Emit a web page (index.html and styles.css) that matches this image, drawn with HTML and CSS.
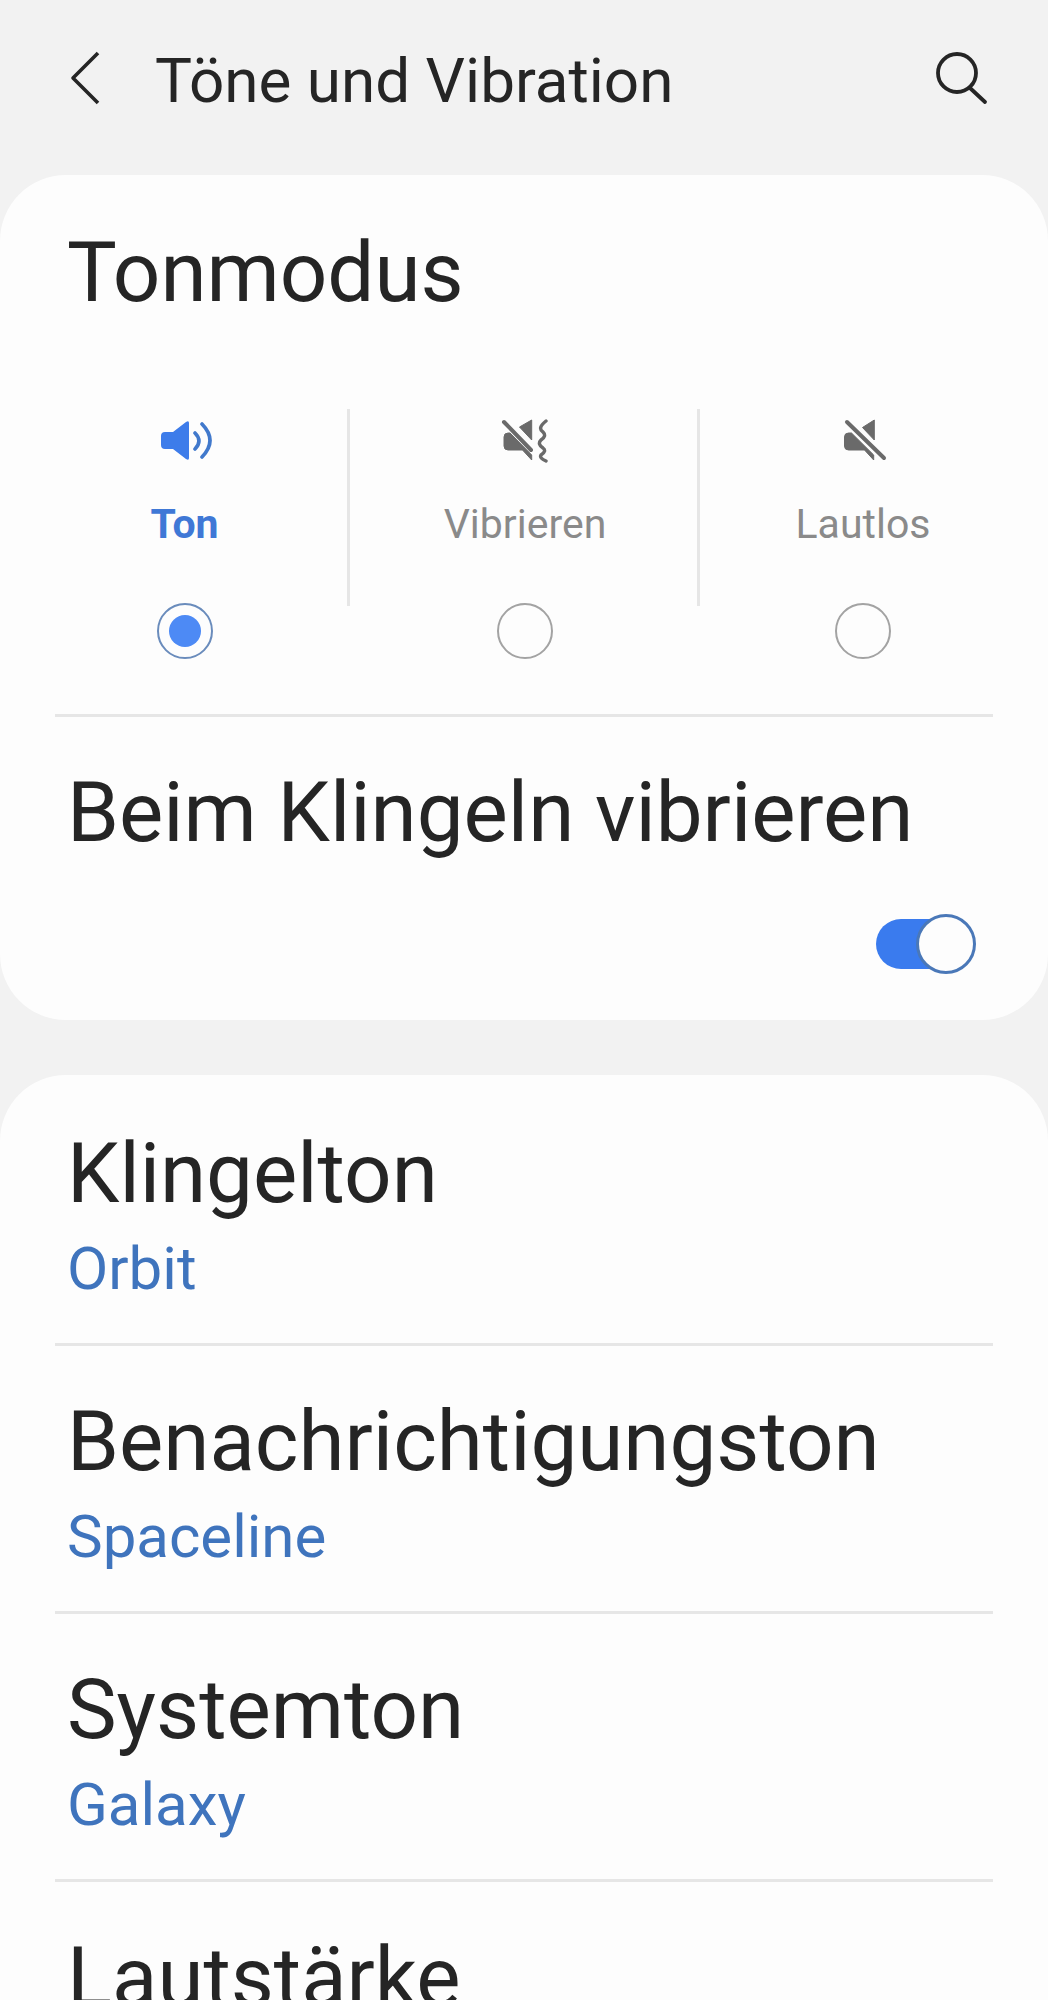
FILE: index.html
```html
<!DOCTYPE html>
<html lang="de">
<head>
  <meta charset="UTF-8" />
  <title>Töne und Vibration</title>
  <link rel="stylesheet" href="styles.css">
</head>
<body>

  <header class="topbar">
    <svg class="back-icon" width="30" height="54" viewBox="0 0 30 54">
      <path d="M28 2 L3 27 L28 52" fill="none" stroke="#252525" stroke-width="3.6" stroke-linejoin="round" />
    </svg>
    <h1 class="page-title">Töne und Vibration</h1>
    <svg class="search-icon" width="54" height="54" viewBox="0 0 54 54">
      <circle cx="22" cy="22" r="19" fill="none" stroke="#252525" stroke-width="3.8" />
      <path d="M35 37 L50 51" fill="none" stroke="#252525" stroke-width="3.8" stroke-linecap="round" />
    </svg>
  </header>

  <section class="card">
    <h2 class="card-title">Tonmodus</h2>

    <div class="modes">
      <div class="mode active">
        <div class="mode-top">
          <svg class="mode-icon" width="56" height="44" viewBox="0 0 56 44">
            <path d="M4 17 q0-4 4-4 h8 L29 3 q3-2 3 1 V39 q0 3-3 1 L16 30 H8 q-4 0-4-4 Z" fill="#3d7cea" />
            <path d="M38 14 Q46 22 38 30 M45 5 Q61 21.5 45 38" fill="none" stroke="#4179cc" stroke-width="3.6" stroke-linecap="round" />
          </svg>
          <span class="mode-label">Ton</span>
        </div>
        <span class="radio checked"></span>
      </div>

      <div class="mode">
        <div class="mode-top">
          <svg class="mode-icon" width="56" height="44" viewBox="0 0 56 44">
            <path d="M7 3 L34 31" fill="none" stroke="#6a6a6a" stroke-width="4" stroke-linecap="round" />
            <path d="M34.7 1 V21 L22.5 8 Z M7 18 q0-4 4-4 h2 L34.7 36 V41 L25.5 31 H11 q-4 0-4-4 Z" fill="#6a6a6a" stroke="#6a6a6a" stroke-width="1" stroke-linejoin="round" />
            <path d="M49 2 Q40 9 46 13 Q50 17 44 21 Q40 25 46 29 Q50 32 44 36 Q42 39 49 42" fill="none" stroke="#6a6a6a" stroke-width="3.4" stroke-linecap="round" />
          </svg>
          <span class="mode-label">Vibrieren</span>
        </div>
        <span class="radio"></span>
      </div>

      <div class="mode">
        <div class="mode-top no-line">
          <svg class="mode-icon" width="56" height="44" viewBox="0 0 56 44">
            <path d="M12 3 L49 39" fill="none" stroke="#6a6a6a" stroke-width="4" stroke-linecap="round" />
            <path d="M39.3 1 V21 L27.5 8.5 Z M9.5 18 q0-4 4-4 h3 L38.7 36 V41 L29.5 31 H13.5 q-4 0-4-4 Z" fill="#6a6a6a" stroke="#6a6a6a" stroke-width="1" stroke-linejoin="round" />
          </svg>
          <span class="mode-label">Lautlos</span>
        </div>
        <span class="radio"></span>
      </div>
    </div>

    <div class="ring-row">
      <h2 class="card-title">Beim Klingeln vibrieren</h2>
      <div class="toggle"><span class="toggle-knob"></span></div>
    </div>
  </section>

  <section class="card list-card">
    <div class="list-row">
      <div class="row-title">Klingelton</div>
      <div class="row-value">Orbit</div>
    </div>
    <div class="list-row">
      <div class="row-title">Benachrichtigungston</div>
      <div class="row-value">Spaceline</div>
    </div>
    <div class="list-row">
      <div class="row-title">Systemton</div>
      <div class="row-value">Galaxy</div>
    </div>
    <div class="list-row">
      <div class="row-title">Lautstärke</div>
    </div>
  </section>

</body>
</html>
```

FILE: styles.css
```css
html, body {
  margin: 0;
  padding: 0;
}

body {
  font-family: Roboto, "Liberation Sans", sans-serif;
  background: #f2f2f2;
  color: #252525;
  height: 2000px;
  overflow: hidden;
}

.topbar {
  height: 175px;
  display: flex;
  align-items: center;
  padding: 0 59px 0 70px;
  box-sizing: border-box;
}

.back-icon {
  margin-top: -20px;
}

.page-title {
  flex: 1;
  margin: -14px 0 0 55px;
  font-size: 62px;
  font-weight: 400;
  line-height: 70px;
}

.search-icon {
  margin-top: -20px;
}

.card {
  background: #fdfdfd;
  border-radius: 66px;
}

.card-title {
  margin: 0;
  padding-left: 67px;
  font-size: 83.5px;
  font-weight: 400;
  line-height: 96px;
}

.card > .card-title {
  padding-top: 50px;
}

.modes {
  display: grid;
  grid-template-columns: 331px 350px 326px;
  margin: 88px 0 0 19px;
}

.mode {
  display: flex;
  flex-direction: column;
  align-items: center;
}

.mode-top {
  width: 100%;
  height: 197px;
  box-sizing: border-box;
  border-right: 3px solid #e6e6e6;
  display: flex;
  flex-direction: column;
  align-items: center;
  padding: 10px 0 0 3px;
}

.mode-top.no-line {
  border-right: none;
  padding-left: 0;
}

.mode-icon {
  display: block;
}

.mode-label {
  margin-top: 38px;
  font-size: 41px;
  line-height: 46px;
  color: #8a8a8a;
}

.mode.active .mode-label {
  color: #3f78d6;
  font-weight: 700;
}

.radio {
  width: 56px;
  height: 56px;
  box-sizing: border-box;
  margin-top: -3px;
  border: 2px solid #a3a3a3;
  border-radius: 50%;
  display: flex;
  align-items: center;
  justify-content: center;
}

.radio.checked {
  border-color: #6a8cbc;
}

.radio.checked::after {
  content: "";
  width: 32px;
  height: 32px;
  border-radius: 50%;
  background: #4d8af5;
}

.ring-row {
  margin: 55px 55px 0;
  padding: 48px 0 51px;
  border-top: 3px solid #e6e6e6;
}

.ring-row .card-title {
  padding-left: 12px;
}

.toggle {
  position: relative;
  width: 90px;
  height: 50px;
  margin: 58px 0 0 821px;
  background: #3a7bee;
  border-radius: 25px;
}

.toggle-knob {
  position: absolute;
  top: -5px;
  right: -10px;
  width: 60px;
  height: 60px;
  box-sizing: border-box;
  background: #fdfdfd;
  border: 3px solid #4a78b8;
  border-radius: 50%;
}

.list-card {
  margin-top: 55px;
  padding-top: 3px;
}

.list-row {
  height: 268px;
  box-sizing: border-box;
  margin: 0 55px;
  padding: 48px 0 0 12px;
  border-bottom: 3px solid #e6e6e6;
}

.row-title {
  font-size: 83.5px;
  line-height: 96px;
}

.row-value {
  margin-top: 14px;
  font-size: 60px;
  line-height: 66px;
  color: #3f74bd;
}
```
